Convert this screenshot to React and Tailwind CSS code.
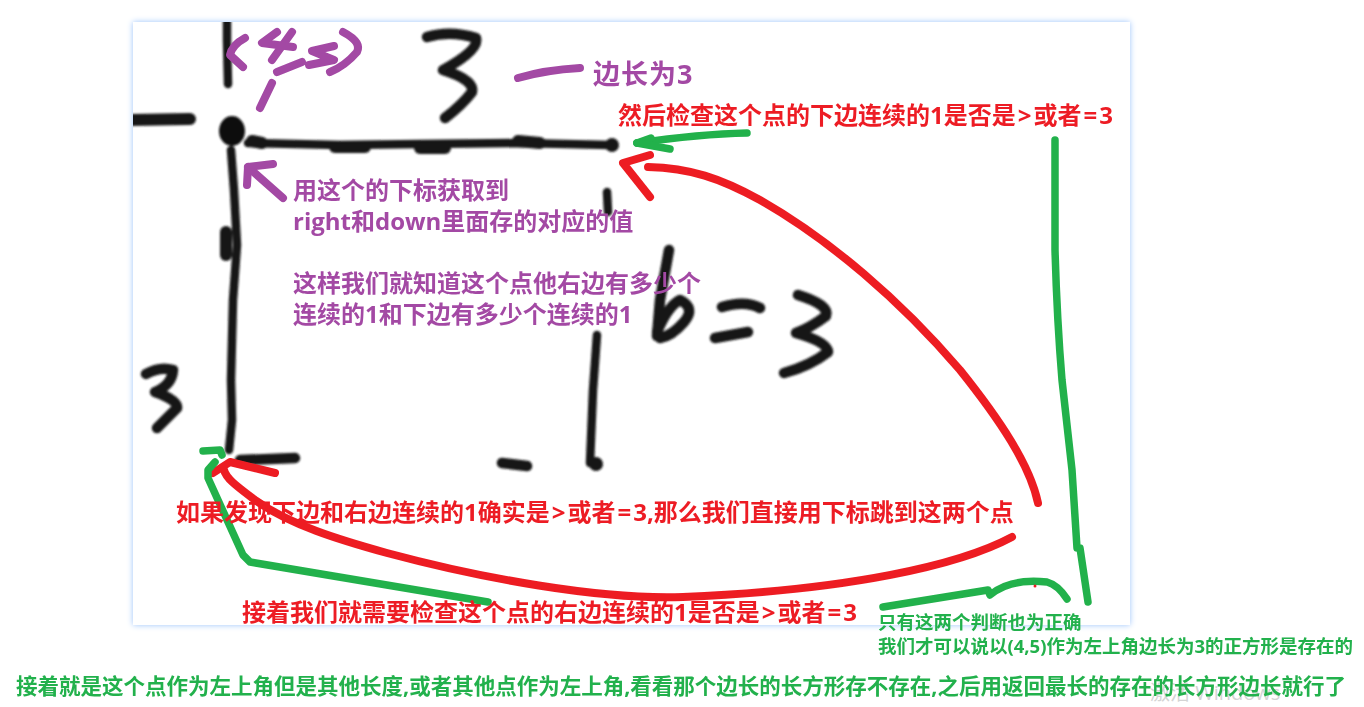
const font = '[font-family:"Open_Sans","Noto_Sans_CJK_SC",sans-serif]';

const thin = [
  "M248 143 L340 145 L420 144 L520 143 L610 145",
  "M231 150 L234 190 L237 245 L233 300 L231 380 L232 420 L229 450",
  "M597 335 L593 390 L590 463",
  "M227 22 L227 40 L228 84",
  "M607 192 L608 212",
];
const black = [
  "M240 460 L270 459 L295 458",
  "M502 463 L527 466",
  "M669 250 L660 300 L657 336",
  "M657 332 Q668 306 680 300 Q696 308 684 322 Q672 336 660 338",
  "M722 307 Q745 300 760 308",
  "M715 338 L748 332",
  "M798 295 Q830 305 826 316 Q810 328 796 333 Q828 342 828 352 Q810 366 784 373",
  "M427 37 Q450 30 476 38 Q480 50 443 70 Q475 80 472 92 Q462 105 445 118",
  "M146 374 Q160 366 173 370 Q172 385 155 392 Q178 400 177 408 L157 428",
];
const blackThick = [
  "M335 147 L365 147",
  "M420 148 L445 148",
  "M518 141 L540 143",
  "M252 141 L262 143",
  "M226 232 L226 255",
];
const purple = [
  "M245 38 Q232 45 230 55 L243 67",
  "M277 32 L262 43 L293 47",
  "M292 32 L272 60",
  "M277 72 L302 62",
  "M334 46 L312 51 L334 60 L309 65",
  "M343 32 Q362 42 357 52 Q345 66 330 72",
  "M272 83 L260 108",
  "M518 78 Q545 70 580 68",
  "M283 198 L248 167",
  "M247 185 L248 167 L273 164",
];
const red = [
  "M650 155 L623 163 L650 197",
  "M648 167 C690 168 720 178 760 200 C830 240 900 300 960 370 C1000 420 1030 465 1038 503",
  "M1012 537 C960 565 850 590 683 597 C600 600 480 578 387 553 C340 540 290 525 255 500 C235 485 226 478 224 470",
  "M275 473 L230 462 L213 473",
];
const green = [
  "M747 133 Q700 134 637 143",
  "M637 143 L651 138",
  "M637 143 L670 149",
  "M1055 140 L1055 250 Q1057 320 1062 380 L1072 470 L1077 548 L1080 548 L1088 602",
  "M488 602 L250 562 L243 555 L208 478 L208 470 L215 462",
  "M203 451 L220 450 L222 455",
  "M883 607 L988 590 L990 595 Q1010 578 1047 582 Q1058 585 1067 599",
];

function Label({ className, children }) {
  return (
    <div className={`absolute whitespace-pre font-bold ${font} ${className}`}>{children}</div>
  );
}

function Op({ children }) {
  return <span className="mx-[2px]">{children}</span>;
}

export default function App() {
  return (
    <div className="relative w-[1364px] h-[707px] overflow-hidden bg-white">
      <div className="ml-[133px] pt-[22px] w-[997px]">
        <div className="h-[603px] bg-white shadow-[0_0_6px_#9cc4fb]" />
      </div>

      <div className={`absolute left-[1150px] top-[680px] text-[20px] leading-[26px] text-[#d4d4d4] ${font}`}>激活 Windows</div>

      <svg
        className="absolute left-0 top-0"
        width="1364"
        height="707"
        fill="none"
        strokeLinecap="round"
        strokeLinejoin="round"
      >
        <defs>
          <filter id="soft" x="-5%" y="-5%" width="110%" height="110%">
            <feGaussianBlur stdDeviation="1" />
          </filter>
          <filter id="softer" x="-5%" y="-5%" width="110%" height="110%">
            <feGaussianBlur stdDeviation="0.45" />
          </filter>
          <clipPath id="frame">
            <rect x="133" y="22" width="997" height="603" />
          </clipPath>
        </defs>
        <g clipPath="url(#frame)">
          <g filter="url(#soft)" stroke="#161616" strokeWidth="10.5">
            {black.map((d) => (
              <path key={d} d={d} />
            ))}
            {thin.map((d) => (
              <path key={d} d={d} strokeWidth="8.5" />
            ))}
            {blackThick.map((d) => (
              <path key={d} d={d} strokeWidth="12" />
            ))}
            <ellipse cx="232" cy="131" rx="13" ry="15" fill="#0c0c0c" stroke="none" />
            <circle cx="612" cy="145" r="7" fill="#161616" stroke="none" />
            <circle cx="596" cy="464" r="7" fill="#161616" stroke="none" />
            <path d="M128 120 L190 119" strokeWidth="12" />
          </g>
        </g>
        <g filter="url(#softer)">
          <g stroke="#a349a4" strokeWidth="8">
            {purple.map((d) => (
              <path key={d} d={d} />
            ))}
          </g>
          <g stroke="#ed1c24" strokeWidth="8">
            {red.map((d) => (
              <path key={d} d={d} />
            ))}
          </g>
          <g stroke="#22b14c" strokeWidth="7.5">
            {green.map((d) => (
              <path key={d} d={d} />
            ))}
          </g>
          <circle cx="1035" cy="586" r="1.5" fill="#ed1c24" />
        </g>
      </svg>

      <div className="absolute inset-0 blur-[0.35px]">
        <Label className="left-[593px] top-[56px] text-[27px] tracking-[1px] leading-[36px] text-[#a349a4]">边长为3</Label>
        <Label className="left-[618px] top-[98px] text-[24px] leading-[34px] text-[#ed1c24]">然后检查这个点的下边连续的1是否是<Op>&gt;</Op>或者<Op>=</Op>3</Label>
        <Label className="left-[293px] top-[174px] text-[24px] leading-[31px] text-[#a349a4]">{"用这个的下标获取到\nright和down里面存的对应的值\n\n这样我们就知道这个点他右边有多少个\n连续的1和下边有多少个连续的1"}</Label>
        <Label className="left-[176px] top-[495px] text-[24px] leading-[34px] text-[#ed1c24]">如果发现下边和右边连续的1确实是<Op>&gt;</Op>或者<Op>=</Op>3,那么我们直接用下标跳到这两个点</Label>
        <Label className="left-[242px] top-[595px] text-[24px] leading-[34px] text-[#ed1c24]">接着我们就需要检查这个点的右边连续的1是否是<Op>&gt;</Op>或者<Op>=</Op>3</Label>
        <Label className="left-[878px] top-[610px] text-[18.5px] leading-[24px] text-[#22b14c]">{"只有这两个判断也为正确\n我们才可以说以(4,5)作为左上角边长为3的正方形是存在的"}</Label>
        <Label className="left-[16px] top-[671px] text-[21.5px] leading-[30px] text-[#22b14c]">接着就是这个点作为左上角但是其他长度,或者其他点作为左上角,看看那个边长的长方形存不存在,之后用返回最长的存在的长方形边长就行了</Label>
      </div>
    </div>
  );
}
